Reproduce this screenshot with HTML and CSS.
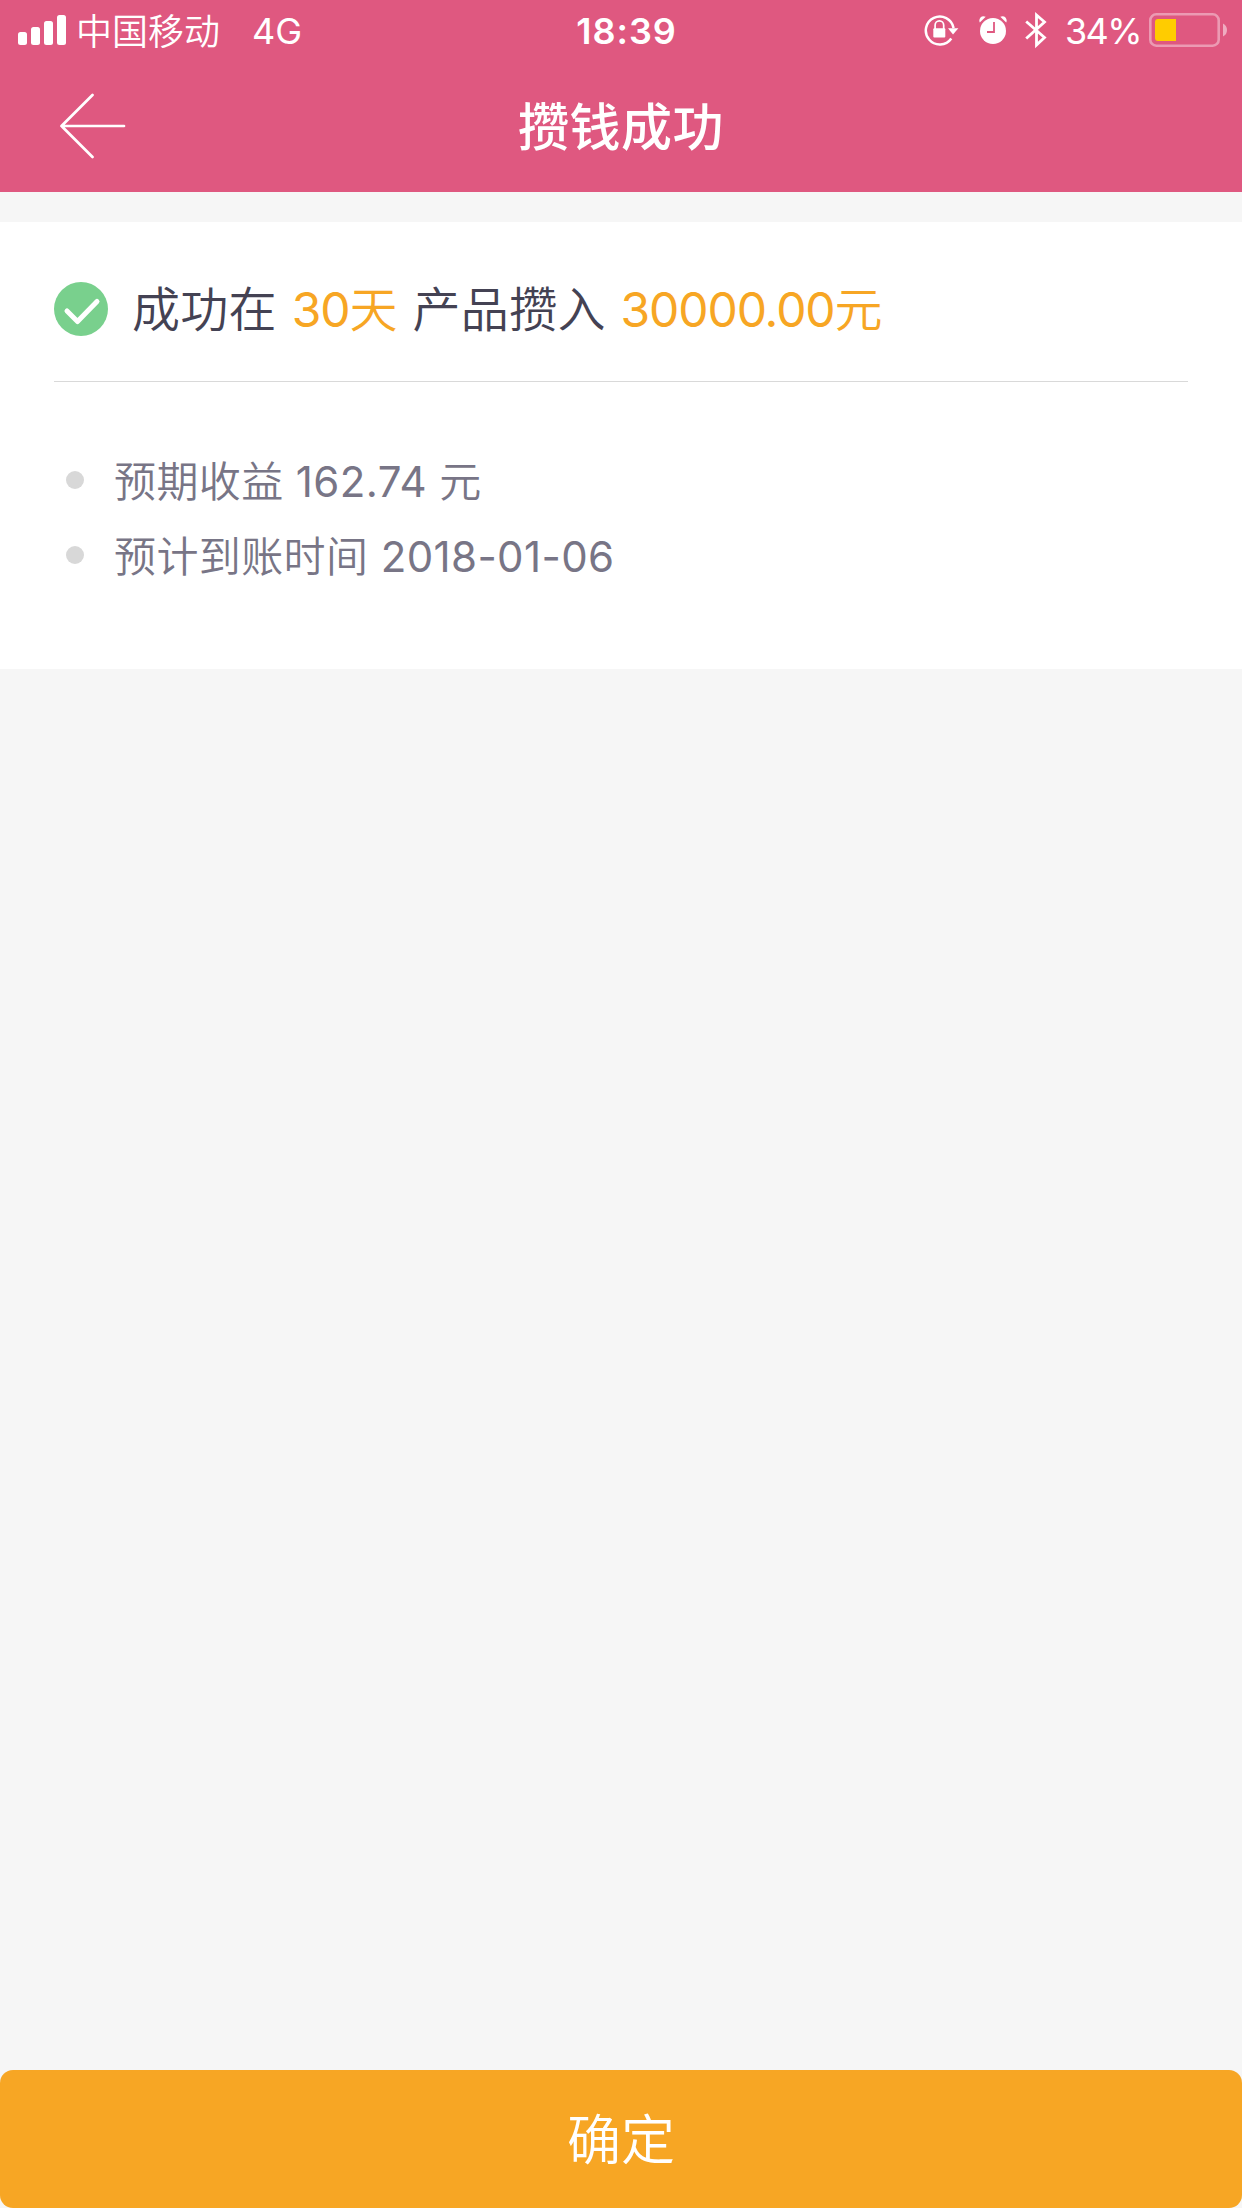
FILE: index.html
```html
<!DOCTYPE html>
<html lang="zh-CN">
<head>
<meta charset="utf-8">
<title>攒钱成功</title>
<link rel="stylesheet" href="styles.css">
</head>
<body>

<header class="header">
  <div class="status">
    <div class="status-left">
      <svg class="signal" width="48" height="30" viewBox="0 0 48 30" fill="#fff">
        <rect x="0" y="17" width="9" height="13" rx="2.5"/>
        <rect x="13" y="12" width="9" height="18" rx="2.5"/>
        <rect x="26" y="6" width="9" height="24" rx="2.5"/>
        <rect x="39" y="0" width="9" height="30" rx="2.5"/>
      </svg>
      <span class="carrier">中国移动</span>
      <span class="network">4G</span>
    </div>
    <div class="time">18:39</div>
    <div class="status-right">
      <svg class="lock" width="36" height="32" viewBox="0 0 36 32">
        <path d="M27.3 24.5A14 14 0 1 1 29.6 14" fill="none" stroke="#fff" stroke-width="2.5"/>
        <path d="M24 14.3h10.4L29 20.6z" fill="#fff"/>
        <rect x="9.3" y="14.2" width="12" height="9.3" rx="1" fill="#fff"/>
        <path d="M11.1 15v-3.8a4.3 4.3 0 0 1 8.6 0V15" fill="none" stroke="#fff" stroke-width="1.7"/>
      </svg>
      <svg class="alarm" width="28" height="30" viewBox="0 0 28 30">
        <circle cx="14" cy="16" r="13" fill="#fff"/>
        <path d="M.8 7.5C-1 4 2.5-.3 6.7 1.8zM27.2 7.5C29 4 25.5-.3 21.3 1.8z" fill="#fff"/>
        <path d="M15 7v10H8" fill="none" stroke="#df5880" stroke-width="1.8"/>
      </svg>
      <svg class="bluetooth" width="22" height="38" viewBox="0 0 22 38">
        <path d="M1.2 10.5L19.5 26.5 11.5 34V4L19.5 11 1.2 27.5" fill="none" stroke="#fff" stroke-width="2.8"/>
      </svg>
      <span class="percent">34%</span>
      <svg class="battery" width="78" height="34" viewBox="0 0 78 34">
        <rect x="1.3" y="1.3" width="68.4" height="31.4" rx="6" fill="none" stroke="#fff" stroke-opacity=".4" stroke-width="2.6"/>
        <path d="M74 10.5q4 2 4 6.5t-4 6.5z" fill="#fff" fill-opacity=".5"/>
        <path d="M27 6v22H9a3 3 0 0 1-3-3V9a3 3 0 0 1 3-3z" fill="#fc0"/>
      </svg>
    </div>
  </div>
  <div class="nav">
    <a class="back" href="#">
      <svg width="66" height="66" viewBox="0 0 66 66" fill="none" stroke="#fff" stroke-width="2.7" stroke-linecap="round" stroke-linejoin="round">
        <path d="M32.5 2L1.5 33l31 31M1.5 33h62.5"/>
      </svg>
    </a>
    <h1 class="title">攒钱成功</h1>
  </div>
</header>

<main class="card">
  <div class="result">
    <svg class="check" width="54" height="54" viewBox="0 0 54 54">
      <circle cx="27" cy="27" r="27" fill="#79d08d"/>
      <path d="M13 29L23.5 39.5 43 19.5" fill="none" stroke="#fff" stroke-width="5" stroke-linecap="round" stroke-linejoin="round"/>
    </svg>
    <p class="message">成功在 <em><span class="num">30</span>天</em> 产品攒入 <em><span class="num">30000.00</span>元</em></p>
  </div>
  <ul class="details">
    <li><p>预期收益 <span class="num">162.74</span> 元</p></li>
    <li><p>预计到账时间 <span class="num">2018-01-06</span></p></li>
  </ul>
</main>

<button class="confirm" type="button">确定</button>

</body>
</html>
```
FILE: styles.css
```css
* {
  box-sizing: border-box;
}

body {
  display: flex;
  flex-direction: column;
  height: 2208px;
  margin: 0;
  background: #f6f6f6;
  font-family: Inter, "Noto Sans CJK SC", sans-serif;
  font-weight: 350;
}

.num {
  font-weight: 380;
}

/* header */
.header {
  height: 192px;
  background: #df5880;
  color: #fff;
}

.status {
  display: grid;
  grid-template-columns: 1fr auto 1fr;
  align-items: center;
  height: 60px;
  padding: 0 15px 0 18px;
  font-size: 36px;
  line-height: 60px;
}

.status-left, .status-right {
  display: flex;
  align-items: center;
  height: 60px;
}

.status-right {
  justify-content: flex-end;
}

.status .signal, .status .battery {
  margin-bottom: 1px;
}

.carrier {
  margin-left: 10px;
  padding-top: 2px;
}

.network {
  margin-left: 32px;
  padding-top: 1px;
  font-weight: 380;
}

.time {
  padding: 1px 0 0 8px;
  font-weight: 600;
  letter-spacing: 1px;
}

.lock, .alarm, .bluetooth {
  margin-bottom: 1px;
}

.alarm {
  margin-left: 19px;
}

.bluetooth {
  margin-left: 18px;
}

.percent {
  margin-left: 18px;
  padding-top: 1px;
  font-weight: 380;
  letter-spacing: -1.6px;
}

.battery {
  margin-left: 8px;
}

.nav {
  display: grid;
  grid-template-columns: 180px 1fr 180px;
  align-items: center;
  height: 132px;
}

.back {
  display: flex;
  margin: -2px 0 0 60px;
}

.title {
  margin: 0;
  padding-top: 2px;
  font-size: 51px;
  font-weight: 500;
  letter-spacing: .5px;
  line-height: 132px;
  text-align: center;
}

/* result card */
.card {
  height: 447px;
  margin-top: 30px;
  padding: 0 54px;
  background: #fff;
}

.result {
  display: flex;
  align-items: center;
  height: 160px;
  padding-top: 14px;
  border-bottom: 1px solid #d9d9d9;
}

.message {
  margin: 0 0 0 24px;
  padding-top: 2px;
  color: #444253;
  font-size: 48px;
  letter-spacing: .3px;
  line-height: 72px;
  word-spacing: 1px;
}

.message em {
  color: #f7a624;
  font-style: normal;
}

.message .num {
  letter-spacing: -1.1px;
}

.details {
  margin: 62px 0 0;
  padding: 0;
  list-style: none;
  color: #787586;
  font-size: 42px;
  letter-spacing: .4px;
  line-height: 75px;
}

.details li {
  display: flex;
  align-items: center;
  padding-left: 12px;
}

.details li::before {
  content: "";
  width: 18px;
  height: 18px;
  margin: 0 30px 4px 0;
  border-radius: 50%;
  background: #d8d8d8;
}

.details p {
  margin: 0;
}

.confirm {
  height: 138px;
  margin-top: auto;
  padding: 4px 0 0;
  border: 0;
  border-radius: 13px;
  background: #f7a624;
  color: #fff;
  font-family: inherit;
  font-size: 54px;
  font-weight: inherit;
  line-height: 134px;
}
```
